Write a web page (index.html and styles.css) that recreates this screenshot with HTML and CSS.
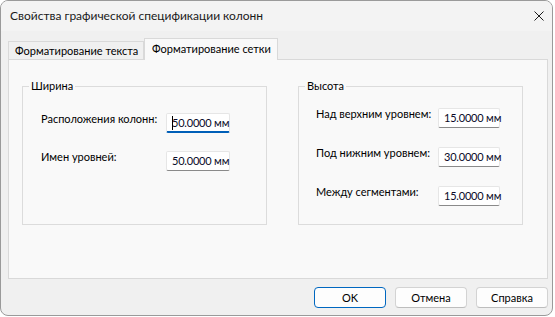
FILE: index.html
```html
<!DOCTYPE html>
<html lang="ru">
<head>
    <meta charset="UTF-8">
    <title>Свойства графической спецификации колонн</title>
    <link rel="stylesheet" href="styles.css">
</head>
<body>
    <div class="window">
        <div class="titlebar">
            <span class="title">Свойства графической спецификации колонн</span>
            <svg class="close" width="10" height="10" viewBox="0 0 10 10">
                <path d="M0.5 0.5 L9.5 9.5 M9.5 0.5 L0.5 9.5" stroke="#1b1b1b" stroke-width="1" fill="none"/>
            </svg>
        </div>

        <div class="tabs">
            <div class="tab">Форматирование текста</div>
            <div class="tab active">Форматирование сетки</div>
        </div>

        <div class="panel">
            <fieldset class="group group-width">
                <legend>Ширина</legend>
                <div class="rows">
                    <label>Расположения колонн:</label>
                    <div class="field focused"><span class="caret"></span>50.0000 мм</div>
                    <label>Имен уровней:</label>
                    <div class="field">50.0000 мм</div>
                </div>
            </fieldset>

            <fieldset class="group group-height">
                <legend>Высота</legend>
                <div class="rows">
                    <label>Над верхним уровнем:</label>
                    <div class="field">15.0000 мм</div>
                    <label>Под нижним уровнем:</label>
                    <div class="field">30.0000 мм</div>
                    <label>Между сегментами:</label>
                    <div class="field">15.0000 мм</div>
                </div>
            </fieldset>
        </div>

        <div class="buttons">
            <button class="btn default">OK</button>
            <button class="btn">Отмена</button>
            <button class="btn">Справка</button>
        </div>
    </div>
</body>
</html>
```

FILE: styles.css
```css
body {
    margin: 0;
    background-color: #fff;
    font-family: Lato, "Noto Sans", sans-serif;
    font-size: 11px;
    color: #000;
}
.window {
    width: 553px;
    height: 316px;
    box-sizing: border-box;
    border: 1px solid #9a9a9a;
    border-radius: 8px;
    background-color: #f0f0f0;
    overflow: hidden;
}
.titlebar {
    height: 30px;
    display: flex;
    align-items: center;
    justify-content: space-between;
    padding: 0 8px 0 9px;
    background-color: #f3f3f3;
}
.title {
    font-size: 12px;
    line-height: 16px;
    color: #1a1a1a;
}
.tabs {
    display: flex;
    align-items: flex-end;
    height: 21px;
    margin-top: 7px;
    padding-left: 7px;
}
.tab {
    box-sizing: border-box;
    width: 136px;
    height: 18px;
    line-height: 18px;
    padding: 0 6px;
    border: 1px solid #d9d9d9;
    border-bottom: none;
    background-color: #f0f0f0;
    white-space: nowrap;
}
.tab.active {
    width: 134px;
    height: 22px;
    margin-bottom: -1px;
    padding: 0 7px;
    line-height: 19px;
    background-color: #f9f9f9;
}
.panel {
    display: flex;
    align-items: flex-start;
    box-sizing: border-box;
    width: 540px;
    height: 220px;
    margin-left: 7px;
    padding: 18px 0 0 13px;
    border: 1px solid #d9d9d9;
    background-color: #f9f9f9;
}
.group {
    box-sizing: border-box;
    height: 147px;
    margin: 0;
    padding: 0;
    border: 1px solid #dcdcdc;
}
.group legend {
    margin-left: 6px;
    padding: 0 2px;
    line-height: 16px;
}
.group-width {
    width: 245px;
}
.group-height {
    width: 225px;
    margin-left: 31px;
}
.rows {
    display: grid;
    align-items: start;
}
.group-width .rows {
    grid-template-columns: 125px 64px;
    row-gap: 16px;
    padding: 17px 0 0 18px;
}
.group-height .rows {
    grid-template-columns: 122px 62px;
    row-gap: 17px;
    padding: 12px 0 0 17px;
}
.rows label {
    line-height: 16px;
    white-space: nowrap;
}
.field {
    position: relative;
    box-sizing: border-box;
    height: 20px;
    margin-top: 2px;
    padding-left: 5px;
    line-height: 18px;
    letter-spacing: -0.2px;
    color: #0a0a28;
    background-color: #fff;
    border: 1px solid #e6e6e6;
    border-bottom-color: #8a8a8a;
    border-radius: 2px;
    white-space: nowrap;
}
.field.focused {
    border-bottom: 2px solid #005fb8;
}
.caret {
    position: absolute;
    left: 5px;
    top: 2px;
    width: 1px;
    height: 14px;
    background-color: #000;
}
.buttons {
    display: flex;
    justify-content: flex-end;
    gap: 9px;
    margin-top: 8px;
    padding-right: 4px;
}
.btn {
    width: 72px;
    height: 21px;
    padding: 0;
    font-family: inherit;
    font-size: 11px;
    color: #000;
    background-color: #fdfdfd;
    border: 1px solid #d3d3d3;
    border-bottom-color: #bdbdbd;
    border-radius: 4px;
}
.btn.default {
    border-color: #0067c0;
}
```
